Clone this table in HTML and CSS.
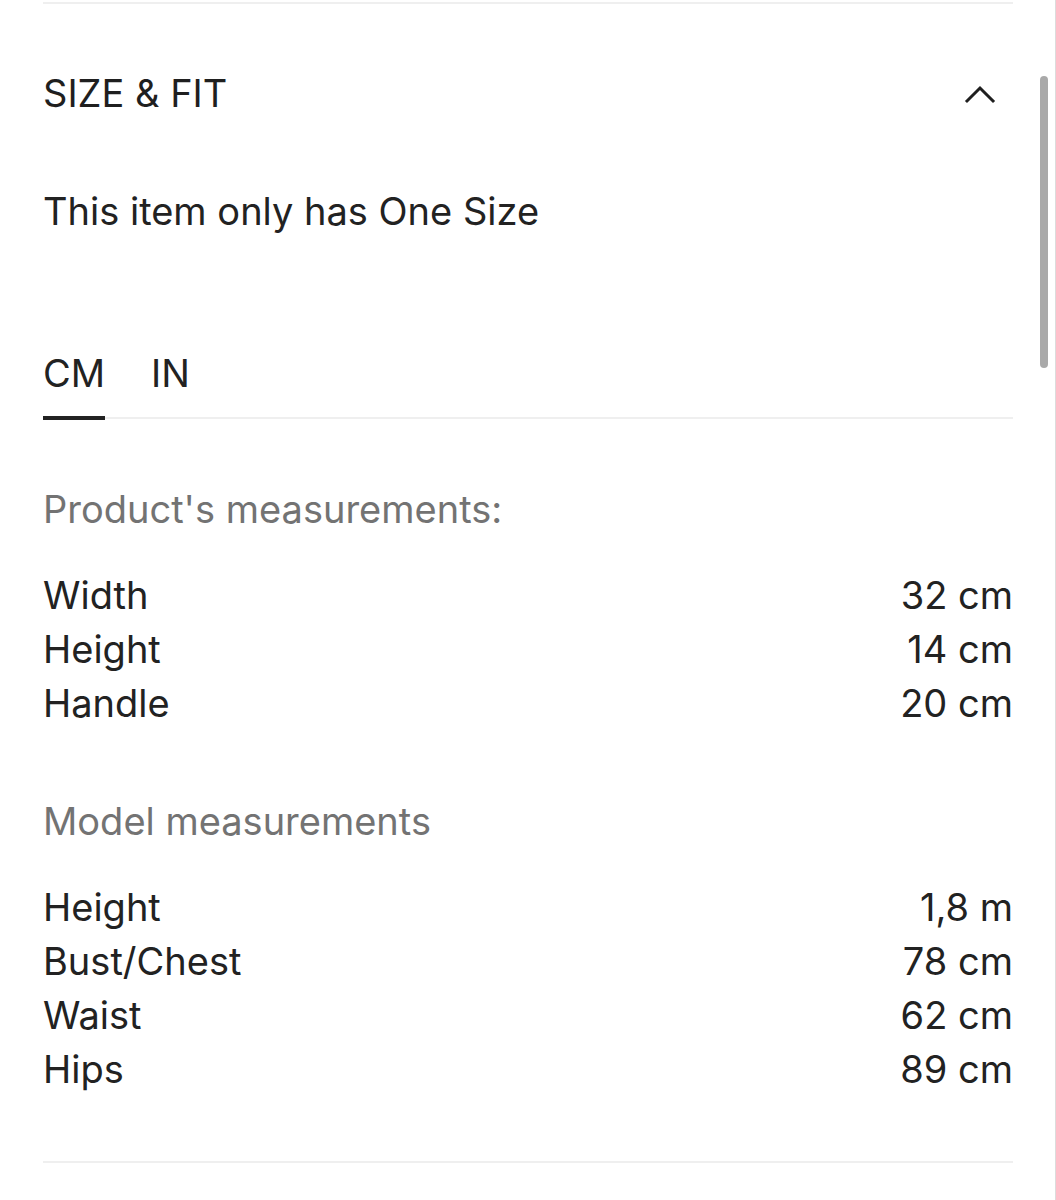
FILE: index.html
```html
<!DOCTYPE html>
<html lang="en">
<head>
<meta charset="utf-8">
<title>Size &amp; Fit</title>
<link rel="stylesheet" href="styles.css">
</head>
<body>
<div class="page">
  <section class="panel">
    <div class="rule rule-top"></div>
    <header class="panel-head">
      <h2 class="panel-title">SIZE &amp; FIT</h2>
      <svg class="chevron" width="32" height="20" viewBox="0 0 32 20" aria-hidden="true">
        <path d="M3 17 L16 4 L29 17" fill="none" stroke="#1f1f1f" stroke-width="3" stroke-linecap="square" stroke-linejoin="miter"/>
      </svg>
    </header>
    <p class="desc">This item only has One Size</p>
    <nav class="tabs">
      <span class="tab tab-active">CM</span>
      <span class="tab">IN</span>
    </nav>
    <h3 class="group-title group-first">Product's measurements:</h3>
    <dl class="rows">
      <div class="row"><dt>Width</dt><dd>32 cm</dd></div>
      <div class="row"><dt>Height</dt><dd>14 cm</dd></div>
      <div class="row"><dt>Handle</dt><dd>20 cm</dd></div>
    </dl>
    <h3 class="group-title">Model measurements</h3>
    <dl class="rows">
      <div class="row"><dt>Height</dt><dd>1,8 m</dd></div>
      <div class="row"><dt>Bust/Chest</dt><dd>78 cm</dd></div>
      <div class="row"><dt>Waist</dt><dd>62 cm</dd></div>
      <div class="row"><dt>Hips</dt><dd>89 cm</dd></div>
    </dl>
    <div class="rule rule-bottom"></div>
  </section>
</div>
<div class="scroll-edge"></div>
<div class="scroll-thumb"></div>
</body>
</html>
```
FILE: styles.css
```css
html, body {
  margin: 0;
  padding: 0;
  background: #ffffff;
}
body {
  font-family: Inter, "Noto Sans", sans-serif;
  color: #222222;
  width: 1056px;
  height: 1200px;
  overflow: hidden;
}
.page {
  padding: 0 43px;
}
.panel {
  width: 970px;
}
.rule {
  height: 2px;
  background: #efefef;
}
.rule-top {
  margin-top: 2px;
}
.rule-bottom {
  margin-top: 65px;
}
.panel-head {
  height: 178px;
  display: flex;
  align-items: center;
  justify-content: space-between;
}
.panel-title {
  margin: 0;
  font-weight: 400;
  font-size: 38px;
  line-height: 54px;
  color: #1f1f1f;
}
.chevron {
  margin-right: 17px;
  margin-top: 2px;
}
.desc, .tab, .group-title, .row {
  font-size: 38px;
  line-height: 54px;
}
.desc {
  margin: 2px 0 0;
}
.tabs {
  margin-top: 108px;
  display: flex;
  gap: 46px;
  border-bottom: 2px solid #efefef;
}
.tab {
  display: block;
  padding-bottom: 16px;
  margin-bottom: -3px;
  border-bottom: 4px solid transparent;
}
.tab-active {
  border-bottom-color: #222222;
}
.group-title {
  margin: 64px 0 0;
  font-weight: 400;
  color: #737373;
}
.group-first {
  margin-top: 63px;
}
.rows {
  margin: 32px 0 0;
}
.row {
  display: flex;
  justify-content: space-between;
}
.row dt, .row dd {
  margin: 0;
}
.scroll-edge {
  position: fixed;
  top: 0;
  right: 0;
  width: 1px;
  height: 1200px;
  background: #dcdcdc;
}
.scroll-thumb {
  position: fixed;
  top: 76px;
  left: 1040px;
  width: 8px;
  height: 292px;
  border-radius: 4px;
  background: #a9a9a9;
}
```
